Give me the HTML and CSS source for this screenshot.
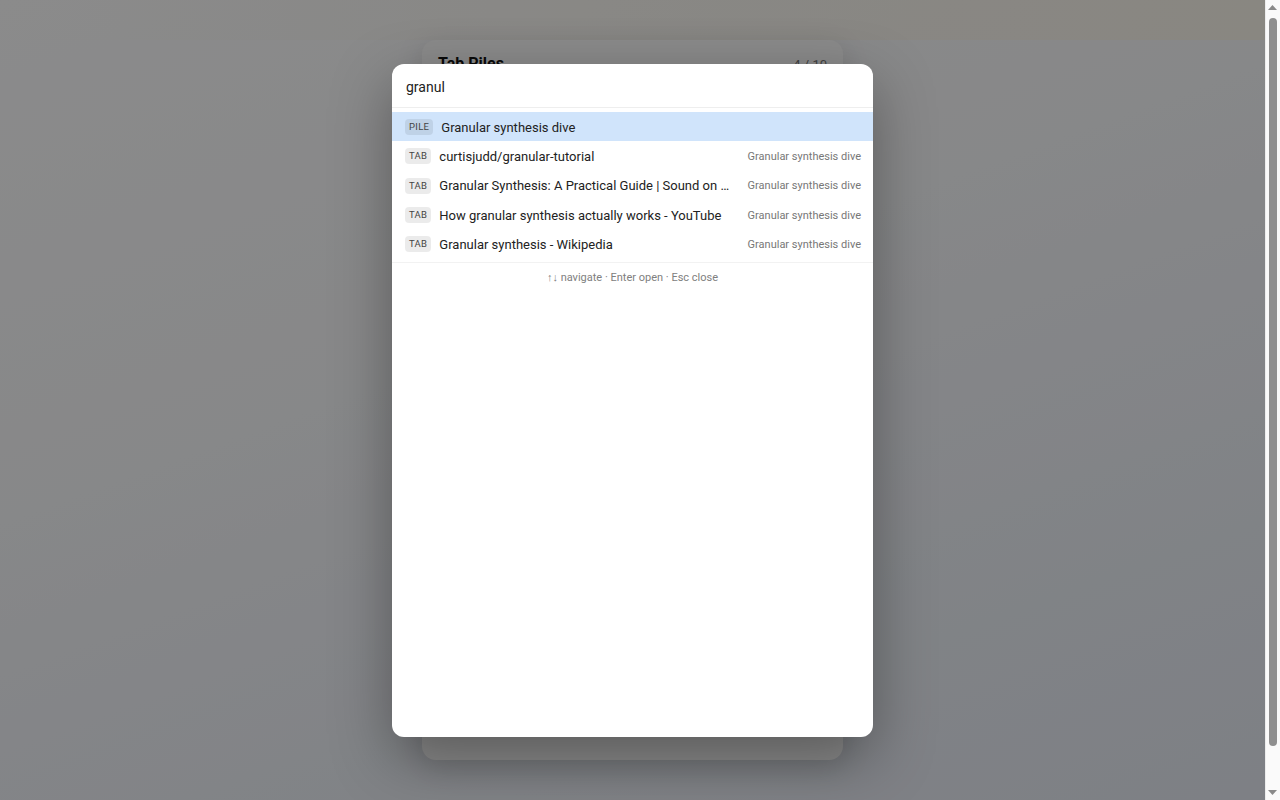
FILE: index.html
```html
<!DOCTYPE html>
<html lang="en">
<head>
<meta charset="utf-8">
<title>Tab Piles</title>
<link rel="stylesheet" href="styles.css">
</head>
<body>
<div class="window">
  <div class="viewport">
    <div class="page">
      <div class="topbar"></div>
      <main class="panel">
        <header class="panel-head">
          <h1 class="panel-title">Tab Piles</h1>
          <span class="panel-count">4 / 10</span>
        </header>
      </main>
      <div class="page-foot"></div>
    </div>

    <div class="overlay">
      <div class="palette">
        <div class="search">
          <input class="search-input" type="text" value="granul">
        </div>
        <ul class="results">
          <li class="result active">
            <span class="badge">PILE</span>
            <span class="title">Granular synthesis dive</span>
          </li>
          <li class="result">
            <span class="badge">TAB</span>
            <span class="title">curtisjudd/granular-tutorial</span>
            <span class="meta">Granular synthesis dive</span>
          </li>
          <li class="result">
            <span class="badge">TAB</span>
            <span class="title">Granular Synthesis: A Practical Guide | Sound on Sound</span>
            <span class="meta">Granular synthesis dive</span>
          </li>
          <li class="result">
            <span class="badge">TAB</span>
            <span class="title">How granular synthesis actually works - YouTube</span>
            <span class="meta">Granular synthesis dive</span>
          </li>
          <li class="result">
            <span class="badge">TAB</span>
            <span class="title">Granular synthesis - Wikipedia</span>
            <span class="meta">Granular synthesis dive</span>
          </li>
        </ul>
        <div class="hint">↑↓ navigate · Enter open · Esc close</div>
      </div>
    </div>
  </div>

  <div class="scrollbar" aria-hidden="true">
    <svg class="sb-arrow" width="15" height="14" viewBox="0 0 15 14"><path d="M3 10 L7.5 5 L12 10 Z" fill="#8a8a8a"/></svg>
    <div class="sb-track">
      <div class="sb-thumb"></div>
    </div>
    <svg class="sb-arrow" width="15" height="14" viewBox="0 0 15 14"><path d="M3 4 L7.5 9 L12 4 Z" fill="#8a8a8a"/></svg>
  </div>
</div>
</body>
</html>
```
FILE: styles.css
```css
* { box-sizing: border-box; }

html, body {
  margin: 0;
  padding: 0;
  height: 100%;
  overflow: hidden;
}

body {
  font-family: Roboto, "Noto Sans", sans-serif;
  color: #222;
  background: #fff;
}

.window {
  display: flex;
  height: 100vh;
}

.viewport {
  position: relative;
  flex: 1 1 auto;
  min-width: 0;
  height: 100%;
  overflow: hidden;
}

.page {
  display: flex;
  flex-direction: column;
  align-items: center;
  min-height: 846px;
  background: linear-gradient(160deg, #fdfdfe 0%, #f6f7f9 40%, #eaeef5 75%, #e4e9f2 100%);
}

.topbar {
  align-self: stretch;
  height: 40px;
  background: linear-gradient(90deg, rgba(255, 255, 255, 0) 0%, rgba(248, 244, 234, 0.6) 55%, rgba(250, 246, 236, 1) 100%);
}

.panel {
  width: 421px;
  height: 720px;
  background: #fbfbfb;
  border-radius: 14px;
  padding: 14px 16px;
  box-shadow: 0 8px 30px rgba(0, 0, 0, 0.12);
}

.panel-head {
  display: flex;
  justify-content: space-between;
  align-items: baseline;
}

.panel-title {
  margin: 0;
  font-size: 16px;
  font-weight: 700;
  color: #111;
}

.panel-count {
  font-size: 13px;
  color: #777;
}

.page-foot {
  height: 86px;
}

.overlay {
  position: absolute;
  top: 0;
  left: 0;
  right: 0;
  height: 100%;
  background: rgba(0, 0, 0, 0.45);
  display: flex;
  justify-content: center;
  align-items: flex-start;
  padding-top: 64px;
}

.palette {
  width: 481px;
  height: 673px;
  background: #fff;
  border-radius: 12px;
  box-shadow: 0 20px 60px rgba(0, 0, 0, 0.35);
  overflow: hidden;
  display: flex;
  flex-direction: column;
}

.search {
  border-bottom: 1px solid #eee;
}

.search-input {
  display: block;
  width: 100%;
  height: 43px;
  border: 0;
  outline: none;
  padding: 2px 14px 0;
  font-family: inherit;
  font-size: 14px;
  color: #222;
  background: transparent;
}

.results {
  list-style: none;
  margin: 0;
  padding: 4px 0;
  border-bottom: 1px solid #f2f2f2;
}

.result {
  display: flex;
  align-items: center;
  gap: 8px;
  height: 29.3px;
  padding: 1px 12px 0 13px;
  font-size: 13px;
}

.result.active {
  background: #d0e4fb;
}

.badge {
  flex: none;
  font-size: 9.5px;
  letter-spacing: 0.3px;
  color: #444;
  background: rgba(0, 0, 0, 0.08);
  border-radius: 4px;
  padding: 1px 4px;
  line-height: 14px;
}

.title {
  flex: 1 1 auto;
  min-width: 0;
  white-space: nowrap;
  overflow: hidden;
  text-overflow: ellipsis;
  color: #222;
}

.meta {
  flex: none;
  margin-left: 6px;
  font-size: 11px;
  color: #777;
}

.hint {
  text-align: center;
  font-size: 11px;
  color: #808080;
  padding: 7px 0 6px;
  line-height: 16px;
}

/* window scrollbar */
.scrollbar {
  flex: none;
  width: 15px;
  height: 100%;
  background: #fafafa;
  border-left: 1px solid #ececec;
  display: flex;
  flex-direction: column;
  align-items: center;
}

.sb-arrow {
  flex: none;
  display: block;
  margin-left: -1px;
}

.sb-track {
  flex: 1 1 auto;
  width: 100%;
  padding: 4px 0 0;
  display: flex;
  justify-content: center;
}

.sb-thumb {
  width: 8px;
  height: 728px;
  margin-left: -1px;
  border-radius: 4px;
  background: #8f8f8f;
}
```
